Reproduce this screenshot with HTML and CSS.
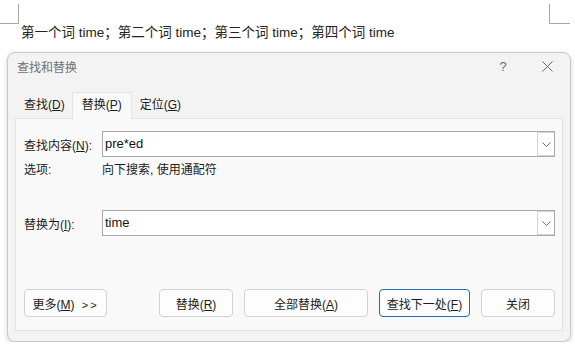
FILE: index.html
```html
<!DOCTYPE html>
<html lang="zh-CN">
<head>
  <meta charset="UTF-8">
  <title>查找和替换</title>
  <link rel="stylesheet" href="styles.css">
</head>
<body>

<!-- document page behind the dialog -->
<div class="page-head">
  <div class="mark mark-left"></div>
  <div class="mark mark-right"></div>
</div>
<p class="doc-text">第一个词 time；第二个词 time；第三个词 time；第四个词 time</p>

<div class="dialog">
  <div class="titlebar">
    <span class="title">查找和替换</span>
    <span class="ctrl ctrl-help">?</span>
    <span class="ctrl ctrl-close">
      <svg width="11" height="11" viewBox="0 0 11 11"><path d="M0.5 0.5 L10.5 10.5 M10.5 0.5 L0.5 10.5" stroke="#6a6a6a" stroke-width="1" fill="none"/></svg>
    </span>
  </div>

  <div class="tabs">
    <div class="tab tab-first">查找(<u>D</u>)</div>
    <div class="tab active">替换(<u>P</u>)</div>
    <div class="tab">定位(<u>G</u>)</div>
  </div>

  <div class="panel">
    <div class="row">
      <label class="label">查找内容(<u>N</u>):</label>
      <div class="combo">
        <span class="combo-text">pre*ed</span>
        <span class="drop"><svg width="9" height="5" viewBox="0 0 9 5"><path d="M0.5 0.5 L4.5 4.5 L8.5 0.5" stroke="#707070" fill="none"/></svg></span>
      </div>
    </div>

    <div class="row row-options">
      <span class="label">选项:</span>
      <span class="options">向下搜索, 使用通配符</span>
    </div>

    <div class="row row-replace">
      <label class="label">替换为(<u>I</u>):</label>
      <div class="combo">
        <span class="combo-text">time</span>
        <span class="drop"><svg width="9" height="5" viewBox="0 0 9 5"><path d="M0.5 0.5 L4.5 4.5 L8.5 0.5" stroke="#707070" fill="none"/></svg></span>
      </div>
    </div>

    <div class="buttons">
      <button class="btn btn-more">更多(<u>M</u>) <span class="arrows">&gt;&gt;</span></button>
      <div class="btn-group">
        <button class="btn btn-replace">替换(<u>R</u>)</button>
        <button class="btn btn-all">全部替换(<u>A</u>)</button>
        <button class="btn btn-next">查找下一处(<u>F</u>)</button>
        <button class="btn btn-close">关闭</button>
      </div>
    </div>
  </div>
</div>

</body>
</html>
```

FILE: styles.css
```css
html, body {
  margin: 0;
  padding: 0;
  background: #ffffff;
  font-family: "Liberation Sans", "Noto Sans CJK SC", sans-serif;
  color: #1b1b1b;
}

/* page corner marks */
.page-head {
  display: flex;
  justify-content: space-between;
  height: 24px;
  padding-right: 5px;
}

.mark {
  margin-top: 4px;
  height: 19px;
  border-bottom: 1px solid #a8a8a8;
}

.mark-left {
  width: 18px;
  border-right: 1px solid #a8a8a8;
}

.mark-right {
  width: 20px;
  border-left: 1px solid #a8a8a8;
}

.doc-text {
  margin: 0;
  padding-left: 21px;
  font-size: 13.5px;
  line-height: 18px;
  color: #222;
}

/* dialog window */
.dialog {
  box-sizing: border-box;
  width: 564px;
  margin: 10px 0 0 7px;
  padding: 0 7px 10px 7px;
  background: #f3f3f3;
  border: 1px solid #c9c9c9;
  border-radius: 8px;
  box-shadow: 0 2px 5px rgba(0, 0, 0, 0.18);
}

.titlebar {
  display: flex;
  align-items: center;
  height: 26px;
  padding-left: 2px;
}

.title {
  flex-grow: 1;
  font-size: 12px;
  color: #707070;
}

.ctrl {
  display: flex;
  justify-content: center;
  align-items: center;
  width: 46px;
  height: 26px;
  color: #6a6a6a;
  font-size: 13px;
}

.ctrl-help {
  margin-right: -2px;
}

.ctrl-close {
  margin-right: -7px;
}

/* tabs */
.tabs {
  display: flex;
  margin-top: 13px;
  height: 26px;
}

.tab {
  box-sizing: border-box;
  height: 26px;
  line-height: 26px;
  padding: 0 8px;
  font-size: 12px;
  color: #1b1b1b;
}

.tab-first {
  padding: 0 7px 0 9px;
}

.tab.active {
  position: relative;
  z-index: 1;
  height: 27px;
  padding: 0 9px;
  line-height: 25px;
  background: #f9f9f9;
  border: 1px solid #e3e3e3;
  border-bottom: none;
}

/* tab panel */
.panel {
  display: flex;
  flex-direction: column;
  padding: 12px 7px 13px 8px;
  background: #f9f9f9;
  border: 1px solid #e3e3e3;
}

.row {
  display: grid;
  grid-template-columns: 78px 1fr;
  align-items: center;
  font-size: 12px;
}

.label {
  color: #1b1b1b;
}

.row-options {
  margin-top: 6px;
  line-height: 14px;
}

.row-replace {
  margin-top: 33px;
}

.combo {
  box-sizing: border-box;
  display: flex;
  align-items: stretch;
  height: 26px;
  background: #ffffff;
  border: 1px solid #a9a9a9;
}

.combo-text {
  flex-grow: 1;
  padding-left: 2px;
  font-size: 13px;
  line-height: 24px;
  color: #111;
}

.drop {
  box-sizing: border-box;
  display: flex;
  justify-content: center;
  align-items: center;
  width: 17px;
  border: 1px solid #d4d4d4;
  border-right: none;
}

/* bottom buttons */
.buttons {
  display: flex;
  margin-top: 53px;
}

.btn-group {
  display: flex;
  gap: 11px;
  margin-left: auto;
}

.btn {
  box-sizing: border-box;
  height: 28px;
  padding: 0;
  font-family: "Liberation Sans", "Noto Sans CJK SC", sans-serif;
  font-size: 12px;
  color: #1b1b1b;
  background: #fdfdfd;
  border: 1px solid #d2d2d2;
  border-radius: 4px;
}

.btn-more {
  width: 83px;
}

.arrows {
  margin-left: 4px;
  letter-spacing: 2px;
  font-size: 11px;
}

.btn-replace {
  width: 74px;
}

.btn-all {
  width: 124px;
}

.btn-next {
  width: 91px;
  border-color: #1f6fb5;
}

.btn-close {
  width: 74px;
}
```
